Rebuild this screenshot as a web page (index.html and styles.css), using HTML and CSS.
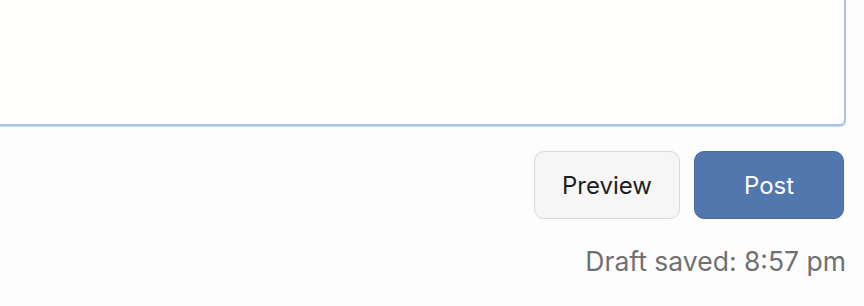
FILE: index.html
```html
<!DOCTYPE html>
<html lang="en">
<head>
  <meta charset="UTF-8">
  <meta name="viewport" content="width=device-width, initial-scale=1.0">
  <title>Reply composer</title>
  <link rel="stylesheet" href="styles.css">
</head>
<body>
  <div class="composer">
    <div class="editor"></div>

    <div class="actions">
      <button class="btn btn-secondary">Preview</button>
      <button class="btn btn-primary">Post</button>
    </div>

    <div class="draft-status">Draft saved: 8:57 pm</div>
  </div>
</body>
</html>
```

FILE: styles.css
```css
body {
  margin: 0;
  background: #fdfdfd;
  font-family: Inter, "Liberation Sans", Arial, sans-serif;
}

.composer {
  padding-right: 18px;
}

.editor {
  height: 132px;
  margin: -10px 0 0 -10px;
  background: #fffffe;
  border: 2px solid #a9c3e7;
  border-radius: 6px;
  box-shadow: 0 1px 0 #c8d6ea;
}

.actions {
  display: flex;
  justify-content: flex-end;
  gap: 14px;
  margin-top: 25px;
  padding-right: 2px;
}

.btn {
  height: 68px;
  padding: 1px 0 0;
  border-radius: 10px;
  font-family: inherit;
  font-size: 24px;
  cursor: pointer;
}

.btn-secondary {
  width: 146px;
  background: #f6f6f6;
  color: #1e1e1e;
  border: 1.5px solid #d9d9d9;
}

.btn-primary {
  width: 150px;
  background: #5277ae;
  color: #ffffff;
  border: 1px solid #47699c;
}

.draft-status {
  margin-top: 26px;
  text-align: right;
  font-size: 26.5px;
  color: #707070;
}
```
